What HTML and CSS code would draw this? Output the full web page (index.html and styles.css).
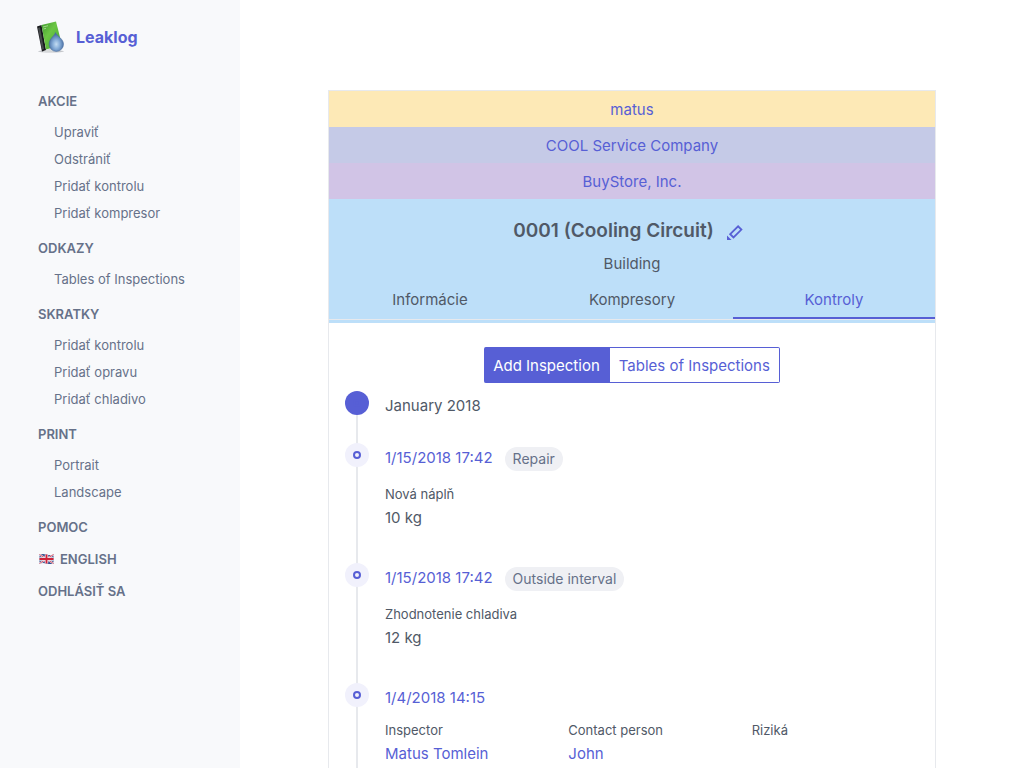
FILE: index.html
```html
<!DOCTYPE html>
<html lang="sk">
<head>
<meta charset="utf-8">
<meta name="viewport" content="width=device-width, initial-scale=1">
<title>Leaklog</title>
<link rel="stylesheet" href="styles.css">
</head>
<body>
<div class="layout">
  <aside class="sidebar">
    <a class="brand" href="#">
      <svg class="brand-logo" viewBox="0 0 28 32" aria-hidden="true">
        <defs>
          <linearGradient id="cover" x1="0" y1="0" x2="1" y2="1"><stop offset="0" stop-color="#3f9a2f"/><stop offset=".4" stop-color="#6cc644"/><stop offset="1" stop-color="#3fa52c"/></linearGradient>
          <radialGradient id="drop" cx=".5" cy=".62" r=".55"><stop offset="0" stop-color="#c3dcf2"/><stop offset=".45" stop-color="#86add8"/><stop offset="1" stop-color="#44699f"/></radialGradient>
        </defs>
        <ellipse cx="14" cy="30.300" rx="13" ry="1.200" fill="#c4c6ca"/>
        <path d="M6 29.500 24 25l1 1.500-5 4-13 .5z" fill="#d9dcdd"/>
        <path d="M0 5.500 4.500 4 9 29l-4 1.500z" fill="#17191b"/>
        <path d="m1 7 2-.7L7 28l-2 .7z" fill="#45494a"/>
        <path d="M4.500 4 19 .5 25 24 9 28.500z" fill="url(#cover)"/>
        <path d="m6 6 5-1.300M6.500 8 9 7.300" stroke="#b6e3a0" stroke-width=".8"/>
        <path d="M18.500 11.500c1 3.500 8 6 8 11.700a7.200 7.200 0 0 1-14.400 0c0-5.700 5.600-8.200 6.400-11.700z" fill="url(#drop)" stroke="#4a6f9f" stroke-width=".6"/>
      </svg>
      <span>Leaklog</span>
    </a>
    <nav class="menu">
      <h2 class="menu-head">AKCIE</h2>
      <ul class="menu-list">
        <li><a href="#">Upraviť</a></li>
        <li><a href="#">Odstrániť</a></li>
        <li><a href="#">Pridať kontrolu</a></li>
        <li><a href="#">Pridať kompresor</a></li>
      </ul>
      <h2 class="menu-head">ODKAZY</h2>
      <ul class="menu-list">
        <li><a href="#">Tables of Inspections</a></li>
      </ul>
      <h2 class="menu-head">SKRATKY</h2>
      <ul class="menu-list">
        <li><a href="#">Pridať kontrolu</a></li>
        <li><a href="#">Pridať opravu</a></li>
        <li><a href="#">Pridať chladivo</a></li>
      </ul>
      <h2 class="menu-head">PRINT</h2>
      <ul class="menu-list">
        <li><a href="#">Portrait</a></li>
        <li><a href="#">Landscape</a></li>
      </ul>
      <a class="menu-head" href="#">POMOC</a>
      <a class="menu-head" href="#">
        <svg class="flag" viewBox="0 0 16 12" aria-hidden="true">
          <path d="M1 1.500q3.500-1 7 0t7 0v9q-3.500 1-7 0t-7 0z" fill="#35508f"/>
          <path d="m1 1.500 14 9M15 1.500l-14 9" stroke="#f3eef2" stroke-width="2"/>
          <path d="m1 1.500 14 9M15 1.500l-14 9" stroke="#d02c43" stroke-width=".8"/>
          <path d="M8 1.500v9M1 6h14" stroke="#f3eef2" stroke-width="3.400"/>
          <path d="M8 1.500v9M1 6h14" stroke="#cf2239" stroke-width="1.900"/>
        </svg>
        ENGLISH
      </a>
      <a class="menu-head" href="#">ODHLÁSIŤ SA</a>
    </nav>
  </aside>

  <main class="main">
    <section class="panel">
      <a class="crumb crumb-user" href="#">matus</a>
      <a class="crumb crumb-company" href="#">COOL Service Company</a>
      <a class="crumb crumb-customer" href="#">BuyStore, Inc.</a>
      <header class="circuit">
        <div class="circuit-title">
          <h1>0001 (Cooling Circuit)</h1>
          <a class="edit" href="#" aria-label="Upraviť">
            <svg viewBox="0 0 16 16" aria-hidden="true"><path d="M0 10.500V15h4.500z" fill="currentColor"/><path d="m3.200 9.200 7.900-7.900 3.300 3.300-7.900 7.900z" fill="none" stroke="currentColor" stroke-width="1.800"/></svg>
          </a>
        </div>
        <p class="circuit-place">Building</p>
        <nav class="tabs">
          <a href="#">Informácie</a>
          <a href="#">Kompresory</a>
          <a class="active" href="#" aria-current="page">Kontroly</a>
        </nav>
      </header>

      <div class="panel-body">
        <div class="btn-group">
          <button class="btn btn-primary" type="button">Add Inspection</button>
          <button class="btn" type="button">Tables of Inspections</button>
        </div>

        <ol class="timeline">
          <li class="item">
            <span class="dot dot-solid"></span>
            <div class="item-month">January 2018</div>
          </li>
          <li class="item">
            <span class="dot"></span>
            <article class="item-content">
              <div class="item-head"><a href="#">1/15/2018 17:42</a><span class="chip">Repair</span></div>
              <dl class="facts">
                <div><dt>Nová náplň</dt><dd>10 kg</dd></div>
              </dl>
            </article>
          </li>
          <li class="item">
            <span class="dot"></span>
            <article class="item-content">
              <div class="item-head"><a href="#">1/15/2018 17:42</a><span class="chip">Outside interval</span></div>
              <dl class="facts">
                <div><dt>Zhodnotenie chladiva</dt><dd>12 kg</dd></div>
              </dl>
            </article>
          </li>
          <li class="item">
            <span class="dot"></span>
            <article class="item-content">
              <div class="item-head"><a href="#">1/4/2018 14:15</a></div>
              <dl class="facts">
                <div><dt>Inspector</dt><dd><a href="#">Matus Tomlein</a></dd></div>
                <div><dt>Contact person</dt><dd><a href="#">John</a></dd></div>
                <div><dt>Riziká</dt><dd></dd></div>
              </dl>
            </article>
          </li>
        </ol>
      </div>
    </section>
  </main>
</div>
</body>
</html>
```
FILE: styles.css
```css
:root {
  --primary: #575fd5;
  --text: #505967;
  --muted: #667189;
  --line: #e7e9ed;
}

*, *::before, *::after { box-sizing: border-box; }

body {
  margin: 0;
  background: #fff;
  color: var(--text);
  font-family: Inter, "Liberation Sans", sans-serif;
  font-size: 15px;
  line-height: 24px;
}

h1, h2, p, ul, ol, dl, dd { margin: 0; padding: 0; }
ul, ol { list-style: none; }
a { color: var(--primary); text-decoration: none; }

.layout { display: flex; min-height: 100vh; }

/* Sidebar */
.sidebar { flex: 0 0 240px; background: #f8f9fb; }

.brand {
  display: flex;
  align-items: center;
  gap: 11px;
  padding: 21px 37px 32px;
  font-size: 16px;
  font-weight: 700;
}
.brand-logo { width: 28px; height: 32px; }

.menu { padding: 0 38px; }

.menu-head {
  display: flex;
  align-items: center;
  gap: 5px;
  height: 32px;
  color: var(--muted);
  font-size: 13px;
  font-weight: 600;
}
.flag { width: 17px; height: 12px; }

.menu-list { padding: 2px 0 5px 16px; }
.menu-list a {
  display: block;
  color: var(--muted);
  font-size: 13px;
  line-height: 27px;
}

/* Main panel */
.main { flex: 1; min-width: 0; padding: 90px 88px 0; }
.panel { border: 1px solid var(--line); }

.crumb { display: block; padding: 7px 8px 5px; text-align: center; }
.crumb-user { background: #fde9b6; }
.crumb-company { background: #c5cae7; }
.crumb-customer { background: #d1c4e6; }

.circuit { padding: 17px 0 3px; background: #bddff9; text-align: center; }
.circuit-title {
  display: flex;
  justify-content: center;
  align-items: center;
  gap: 13px;
  height: 30px;
  padding-right: 8px;
}
.circuit-title h1 { font-size: 19px; font-weight: 600; }
.edit { display: flex; padding-top: 4px; }
.edit svg { width: 16px; height: 16px; }
.circuit-place { padding-top: 6px; }

.tabs {
  display: flex;
  padding-top: 4px;
  border-bottom: 1px solid var(--line);
}
.tabs a {
  flex: 1;
  padding: 8px 4px 5px;
  border-bottom: 2px solid transparent;
  color: inherit;
}
.tabs .active { border-color: var(--primary); color: var(--primary); }

.panel-body { padding: 24px 16px; }

.btn-group { display: flex; justify-content: center; margin-bottom: 8px; }
.btn {
  height: 36px;
  padding: 1px 9px 0;
  border: 1px solid var(--primary);
  border-left: 0;
  border-radius: 0 2px 2px 0;
  background: #fff;
  color: var(--primary);
  font: inherit;
}
.btn-primary {
  border-radius: 2px 0 0 2px;
  background: var(--primary);
  color: #fff;
}

/* Timeline */
.item {
  display: flex;
  gap: 16px;
  padding-bottom: 24px;
  background: linear-gradient(var(--line), var(--line)) 11px 0 / 2px 100% no-repeat;
}
.item:first-child { background-position: 11px 12px; }

.dot {
  display: flex;
  flex: none;
  align-items: center;
  justify-content: center;
  width: 24px;
  height: 24px;
  border-radius: 50%;
  background: #f1f1fc;
}
.dot::before {
  content: "";
  width: 8px;
  height: 8px;
  border: 2px solid var(--primary);
  border-radius: 50%;
}
.dot-solid { background: var(--primary); }

.item-month { padding: 3px 0 1px; }
.item-content { flex: 1; padding: 3px 0 9px; }
.item-head { display: flex; align-items: flex-start; gap: 12px; }
.chip {
  margin: 1px 0 3px;
  padding: 0 8px;
  border-radius: 12px;
  background: #eff0f4;
  color: var(--muted);
  font-size: 14px;
}

.facts {
  display: grid;
  grid-template-columns: repeat(3, 1fr);
  margin: 10px -8px 0;
}
.facts > div { padding: 0 8px; }
.facts dt { margin-bottom: 2px; font-size: 13px; line-height: 20px; }
.facts dd { min-height: 24px; }
```
